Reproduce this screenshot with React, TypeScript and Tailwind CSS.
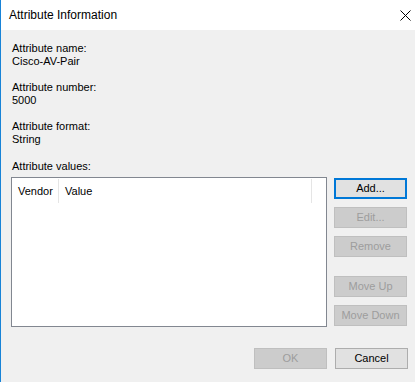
import { X } from 'lucide-react';

const fields = [
  { label: 'Attribute name:', value: 'Cisco-AV-Pair' },
  { label: 'Attribute number:', value: '5000' },
  { label: 'Attribute format:', value: 'String' },
];

const btnBase = 'w-[73px] h-[21px] flex items-center justify-center text-[11px] leading-[13px]';
const btnOn = `${btnBase} bg-[#e1e1e1] border border-[#adadad] text-black`;
const btnOff = `${btnBase} bg-[#cccccc] border border-[#bfbfbf] text-[#9d9d9d]`;

export default function App() {
  return (
    <div className="w-[415px] h-[382px] bg-[#f0f0f0] border-l border-[#1883d7] flex flex-col font-['Liberation_Sans',Arial,sans-serif] text-black overflow-hidden">
      {/* Title bar */}
      <div className="h-[30px] bg-white flex items-center justify-between pl-[8px] pr-[3px] shrink-0">
        <span className="text-[12px] leading-[14px]">Attribute Information</span>
        <div className="w-[12px] h-[12px] flex items-center justify-center mr-[1px]">
          <svg width="11" height="11" viewBox="0 0 11 11">
            <path d="M0.5 0.5 L10.5 10.5 M10.5 0.5 L0.5 10.5" stroke="#000" strokeWidth="1" />
          </svg>
        </div>
      </div>

      {/* Body */}
      <div className="flex flex-col pl-[10px] pt-[12px] text-[11px] leading-[13px]">
        {fields.map((f) => (
          <div key={f.label} className="flex flex-col ml-[1px] mb-[13px]">
            <span>{f.label}</span>
            <span>{f.value}</span>
          </div>
        ))}
        <span className="ml-[1px] mt-[1px]">Attribute values:</span>

        <div className="flex mt-[4px] gap-[7px]">
          {/* List view */}
          <div className="w-[316px] h-[150px] border border-[#828790] bg-white flex flex-col">
            <div className="flex h-[25px]">
              <div className="w-[47px] border-r border-[#e5e5e5] flex items-center pl-[6px] mt-[1px]">Vendor</div>
              <div className="w-[253px] border-r border-[#e5e5e5] flex items-center pl-[6px] mt-[1px]">Value</div>
            </div>
          </div>

          {/* Side buttons */}
          <div className="flex flex-col pt-[1px]">
            <div className={`${btnBase} bg-[#e1e1e1] border-2 border-[#0078d7] text-black`}>Add...</div>
            <div className={`${btnOff} mt-[8px]`}>Edit...</div>
            <div className={`${btnOff} mt-[8px]`}>Remove</div>
            <div className={`${btnOff} mt-[19px]`}>Move Up</div>
            <div className={`${btnOff} mt-[8px]`}>Move Down</div>
          </div>
        </div>

        {/* Footer */}
        <div className="flex justify-end gap-[8px] pr-[7px] mt-[21px]">
          <div className={btnOff}>OK</div>
          <div className={btnOn}>Cancel</div>
        </div>
      </div>
    </div>
  );
}
